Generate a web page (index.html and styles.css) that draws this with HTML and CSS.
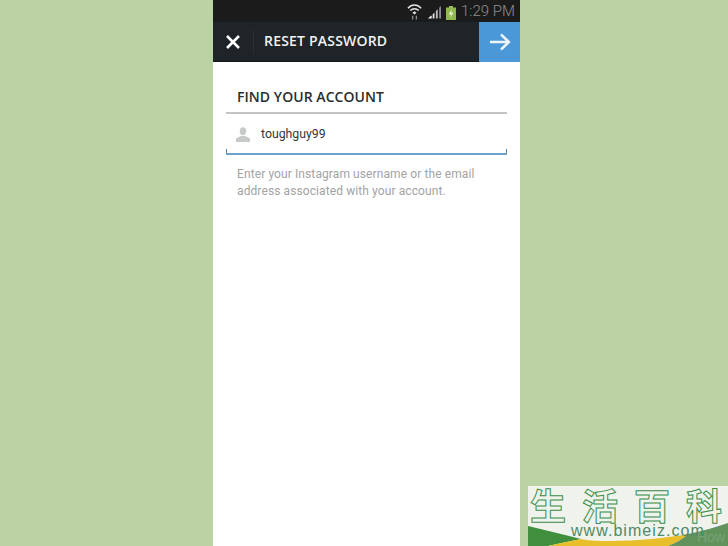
FILE: index.html
```html
<!DOCTYPE html>
<html lang="en">
<head>
    <meta charset="UTF-8">
    <meta name="viewport" content="width=device-width, initial-scale=1.0">
    <title>Reset Password</title>
    <link rel="stylesheet" href="styles.css">
</head>
<body>
    <div class="phone">
        <div class="status-bar">
            <svg class="wifi" width="15" height="18" viewBox="0 0 16 18">
                <path d="M1 6 C5 1.5 11 1.5 15 6" fill="none" stroke="#e4e4e4" stroke-width="1.6"/>
                <path d="M3.5 8.5 C6 6 10 6 12.5 8.5" fill="none" stroke="#e4e4e4" stroke-width="1.6"/>
                <path d="M5.8 10.8 L8 9.2 L10.2 10.8 L8 12.6 Z" fill="#e4e4e4"/>
                <path d="M6 14 V18 M10 14 V18" stroke="#8d8d8d" stroke-width="1.4"/>
            </svg>
            <svg class="signal" width="13" height="14" viewBox="0 0 14 14">
                <path d="M0 14 L3 11 H4 V14 Z" fill="#f0f0f0"/>
                <path d="M5 14 V9.5 L7 7.5 V14 Z" fill="#dcdcdc"/>
                <path d="M8.5 14 V6 L10.5 4 V14 Z" fill="#bdbdbd"/>
                <path d="M12 14 V2.5 L14 0.5 V14 Z" fill="#8a8a8a"/>
            </svg>
            <svg class="battery" width="10" height="14" viewBox="0 0 10 14">
                <rect x="3" y="0" width="4" height="2" fill="#9bbf6a"/>
                <rect x="0" y="1.5" width="10" height="12.5" fill="#8fb84e"/>
                <path d="M6 3 L2.5 8.5 H5 L4 12 L7.5 6.5 H5 Z" fill="#e8f2d8"/>
            </svg>
            <span class="clock">1:29 PM</span>
        </div>
        <div class="action-bar">
            <svg class="close-icon" width="16" height="16" viewBox="0 0 16 16">
                <path d="M2 2 L14 14 M14 2 L2 14" stroke="#fff" stroke-width="2.6"/>
            </svg>
            <div class="divider"></div>
            <div class="action-title">RESET PASSWORD</div>
            <div class="next-button">
                <svg width="22" height="18" viewBox="0 0 22 18">
                    <path d="M1 9 H20 M12 1.5 L20 9 L12 16.5" fill="none" stroke="#eef6fc" stroke-width="2.4"/>
                </svg>
            </div>
        </div>
        <div class="content">
            <div class="section-title">FIND YOUR ACCOUNT</div>
            <div class="field">
                <svg class="user-icon" width="14" height="15" viewBox="0 0 14 15">
                    <ellipse cx="7" cy="4.2" rx="3.2" ry="4" fill="#c8caca"/>
                    <path d="M0 15 V12.5 C0 10.5 3.5 10 5 9 H9 C10.5 10 14 10.5 14 12.5 V15 Z" fill="#c8caca"/>
                </svg>
                <span class="field-value">toughguy99</span>
            </div>
            <p class="hint">Enter your Instagram username or the email address associated with your account.</p>
        </div>
    </div>

    <div class="watermark">
        <svg class="wm-swoosh" width="200" height="60" viewBox="0 0 200 60">
            <path d="M0 40 C18 44 36 49 53 53 C42 55 30 58 20 60 H0 Z" fill="#3f8f3d"/>
            <path d="M20 60 C32 57 43 55 53 53 C62 55 72 55 83 55 C110 55 138 52 160 48 C155 53 148 57 140 60 Z" fill="#e8bf2a"/>
            <path d="M160 48 C175 45 188 41 200 37 V60 H140 C148 57 155 53 160 48 Z" fill="#62935c"/>
        </svg>
        <div class="wm-title">
            <span>生</span><span>活</span><span>百</span><span>科</span>
        </div>
        <div class="wm-url">www.bimeiz.com</div>
        <div class="wm-faint">How</div>
    </div>
</body>
</html>
```

FILE: styles.css
```css
html, body {
    height: 100%;
}

body {
    margin: 0;
    background-color: #bad2a4;
    font-family: "Roboto", "Liberation Sans", sans-serif;
    overflow: hidden;
}

.phone {
    width: 307px;
    height: 546px;
    margin-left: 213px;
    background-color: #fff;
}

.status-bar {
    height: 22px;
    display: flex;
    align-items: center;
    justify-content: flex-end;
    padding-right: 5px;
    background-color: #1b1b1b;
}

.wifi {
    margin-right: 6px;
}

.signal {
    margin: 2px 5px 0 0;
}

.battery {
    margin: 3px 5px 0 0;
}

.clock {
    font-size: 15px;
    font-weight: 300;
    color: #8f8f8f;
}

.action-bar {
    height: 40px;
    display: flex;
    align-items: center;
    background-color: #1f2428;
    border-bottom: 1px solid #15181a;
    box-sizing: border-box;
}

.close-icon {
    margin-left: 12px;
}

.divider {
    width: 1px;
    height: 24px;
    margin-left: 12px;
    background-color: #2b3035;
}

.action-title {
    flex: 1;
    margin: 0 0 2px 10px;
    font-family: "Open Sans", sans-serif;
    font-size: 14px;
    font-weight: 600;
    letter-spacing: 0.2px;
    color: #f2f2f2;
}

.next-button {
    width: 41px;
    height: 40px;
    display: flex;
    align-items: center;
    justify-content: center;
    background-color: #4a98d8;
}

.content {
    padding: 26px 13px 0 13px;
}

.section-title {
    height: 24px;
    padding-left: 11px;
    border-bottom: 2px solid #c4c4c4;
    font-family: "Open Sans", sans-serif;
    font-size: 14px;
    font-weight: 600;
    line-height: 17px;
    letter-spacing: 0.05px;
    color: #2b2e30;
}

.field {
    position: relative;
    height: 41px;
    display: flex;
    align-items: center;
    padding: 1px 0 0 10px;
    box-sizing: border-box;
    border-bottom: 2px solid #6ea2c8;
}

/* little ticks at both ends of the underline */
.field::before,
.field::after {
    content: "";
    position: absolute;
    bottom: 0;
    width: 1px;
    height: 4px;
    background-color: #4f83a8;
}

.field::before {
    left: 0;
}

.field::after {
    right: 0;
}

.user-icon {
    margin-right: 11px;
}

.field-value {
    font-size: 12.3px;
    color: #33363a;
}

.hint {
    margin: 11px 0 0 11px;
    font-size: 12px;
    line-height: 17px;
    letter-spacing: 0.1px;
    color: #a3a3a3;
}

.watermark {
    position: absolute;
    left: 528px;
    top: 486px;
    width: 200px;
    height: 60px;
    background-color: #f0f3ec;
}

.wm-title {
    display: flex;
    gap: 16px;
    padding-left: 2px;
    font-family: "Noto Sans CJK SC", sans-serif;
    font-size: 36px;
    line-height: 36px;
    font-weight: 700;
    color: #f0f3ec;
    -webkit-text-stroke: 1px #3c8f4a;
}

.wm-swoosh {
    position: absolute;
    left: 0;
    top: 0;
}

.wm-url {
    position: absolute;
    left: 43px;
    top: 36px;
    font-family: "Liberation Sans", sans-serif;
    font-size: 16px;
    line-height: 18px;
    letter-spacing: 1.05px;
    color: #4c8a68;
}

.wm-faint {
    position: absolute;
    left: 169px;
    top: 44px;
    font-family: "Liberation Sans", sans-serif;
    font-size: 14px;
    line-height: 15px;
    color: #7aa176;
}
```
